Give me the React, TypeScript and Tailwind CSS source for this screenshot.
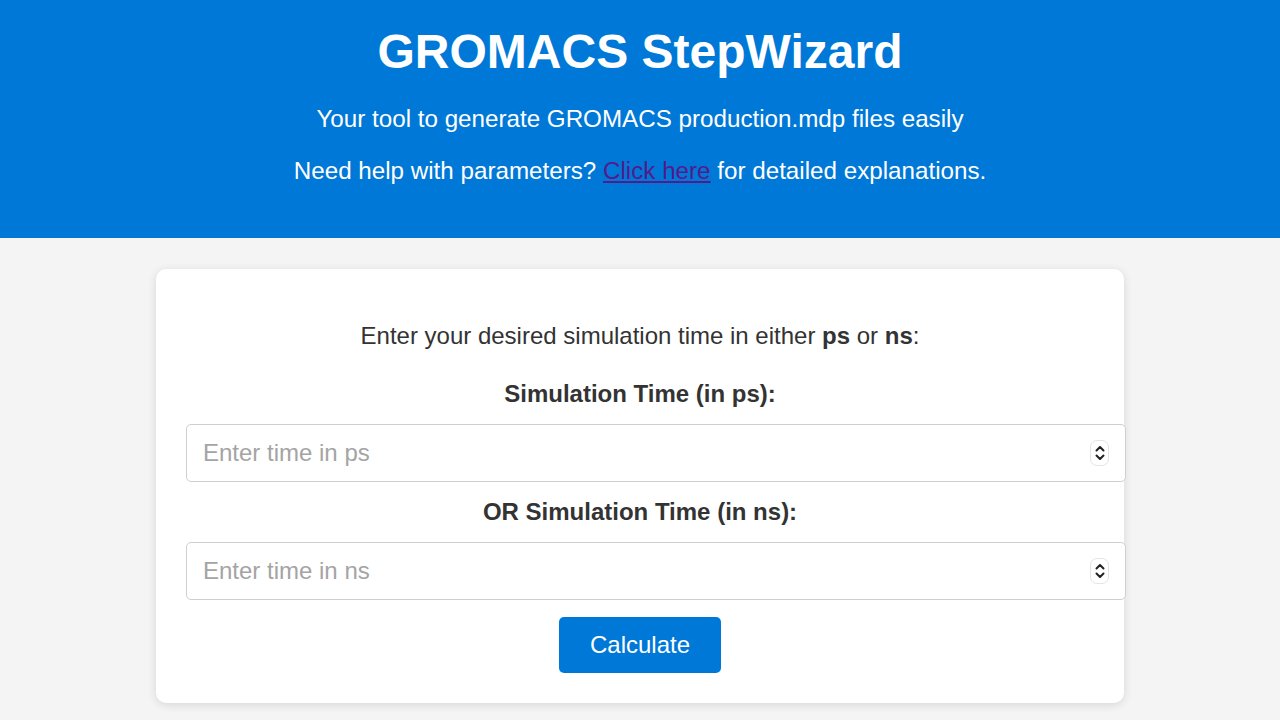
function Spinner() {
  return (
    <div className="pointer-events-none absolute right-[17px] top-1/2 flex h-[26px] w-[19px] -translate-y-1/2 flex-col items-center justify-center rounded-[7px] border border-[#e4e4e4] bg-white">
      <svg width="12" height="22" viewBox="0 0 12 22" fill="none" stroke="#222" strokeWidth="2" strokeLinecap="round" strokeLinejoin="round">
        <path d="M2.5 8.5 6 5 9.5 8.5" />
        <path d="M2.5 13.5 6 17 9.5 13.5" />
      </svg>
    </div>
  );
}

function TimeField({ label, placeholder }: { label: string; placeholder: string }) {
  return (
    <>
      <label className="block text-[24px] font-bold leading-[30px] text-[#333]">{label}</label>
      <div className="relative mt-[15px] w-[calc(100%+32px)]">
        <input
          type="text"
          placeholder={placeholder}
          className="block h-[58px] w-full rounded-[5px] border border-[#cfcfcf] bg-white px-[16px] text-[24px] text-[#333] placeholder:text-[#a4a4a4] outline-none"
        />
        <Spinner />
      </div>
    </>
  );
}

export default function App() {
  return (
    <div className="min-h-[720px] bg-[#f4f4f4] font-['Liberation_Sans',Arial,sans-serif]">
      <header className="h-[238px] bg-[#0078d7] pt-[24px] text-center text-white">
        <h1 className="text-[48px] font-bold leading-[56px]">GROMACS StepWizard</h1>
        <p className="mt-[25px] text-[24.2px] leading-[28px]">Your tool to generate GROMACS production.mdp files easily</p>
        <p className="mt-[24px] text-[24.2px] leading-[28px]">
          Need help with parameters?{" "}
          <a href="#" className="text-[#551a8b] underline">
            Click here
          </a>{" "}
          for detailed explanations.
        </p>
      </header>

      <main className="px-[156px] pt-[31px]">
        <div className="rounded-[10px] bg-white px-[30px] pb-[30px] pt-[52px] text-center shadow-[0_2px_10px_rgba(0,0,0,0.12)]">
          <p className="text-[24px] leading-[30px] text-[#333]">
            Enter your desired simulation time in either <b>ps</b> or <b>ns</b>:
          </p>
          <div className="mt-[28px]">
            <TimeField label="Simulation Time (in ps):" placeholder="Enter time in ps" />
          </div>
          <div className="mt-[15px]">
            <TimeField label="OR Simulation Time (in ns):" placeholder="Enter time in ns" />
          </div>
          <button className="mt-[17px] h-[56px] w-[162px] rounded-[5px] bg-[#0078d7] text-[24px] text-white">
            Calculate
          </button>
        </div>
      </main>
    </div>
  );
}
